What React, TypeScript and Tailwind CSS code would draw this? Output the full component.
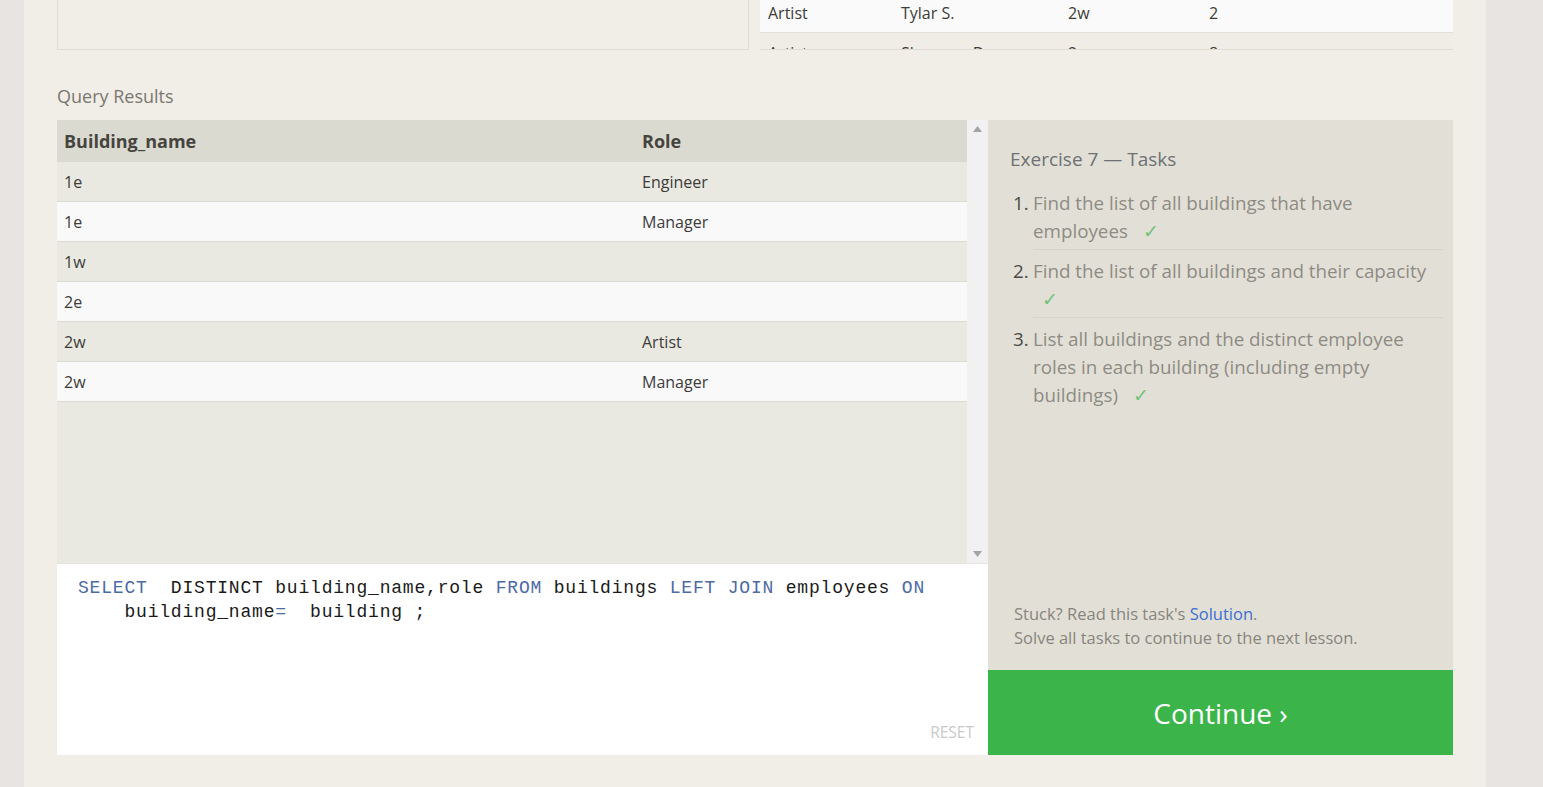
const results: [string, string][] = [
  ['1e', 'Engineer'],
  ['1e', 'Manager'],
  ['1w', ''],
  ['2e', ''],
  ['2w', 'Artist'],
  ['2w', 'Manager'],
];

const topRows = [
  ['Artist', 'Tylar S.', '2w', '2'],
  ['Artist', 'Sherman D.', '2w', '8'],
];

function Check({ className = '' }: { className?: string }) {
  return <span className={`text-[#74c27a] ${className}`}>✓</span>;
}

function TaskItem({ n, children, last }: { n: number; children: React.ReactNode; last?: boolean }) {
  return (
    <li className="flex">
      <span className="w-[23px] shrink-0 pl-[3px] pt-[7px] text-[#4b4a47]">{n}.</span>
      <div className={`flex-1 pt-[7px] pb-[4px] ${last ? '' : 'border-b border-[#d6d4ca]'}`}>{children}</div>
    </li>
  );
}

export default function App() {
  return (
    <div className="min-h-screen bg-[#e8e4e1] font-['Open_Sans',sans-serif]">
      <div className="ml-[24px] w-[1462px] h-[787px] bg-[#f0eee7] px-[33px] overflow-hidden">
        {/* top area, scrolled off */}
        <div className="flex h-[50px]">
          <div className="w-[692px] border-l border-r border-b border-[#e0ddd5]" />
          <div className="ml-[11px] flex-1 border-b border-[#e0ddd5] overflow-hidden">
            <div className="-mt-[7px] text-[16px] text-[#3d3c39]">
              {topRows.map((r, i) => (
                <div
                  key={i}
                  className={`flex h-[40px] items-center pl-[8px] ${
                    i === 0 ? 'bg-[#fafafa] border-b border-[#e0ddd5]' : 'bg-[#efede6]'
                  }`}
                >
                  <span className="w-[133px]">{r[0]}</span>
                  <span className="w-[167px]">{r[1]}</span>
                  <span className="w-[141px]">{r[2]}</span>
                  <span>{r[3]}</span>
                </div>
              ))}
            </div>
          </div>
        </div>

        <div className="mt-[34px] mb-[12px] h-[24px] leading-[24px] text-[18px] text-[#7b7770]">Query Results</div>

        <div className="flex h-[635px]">
          {/* left: results + editor */}
          <div className="w-[931px] flex flex-col">
            <div className="flex h-[443px]">
              <div className="flex-1 bg-[#e9e8e1] text-[16px] text-[#3d3c39]">
                <div className="flex h-[42px] items-center bg-[#dbdad0] pl-[7px] font-bold text-[18px] text-[#45443f]">
                  <span className="w-[578px]">Building_name</span>
                  <span>Role</span>
                </div>
                {results.map((r, i) => (
                  <div
                    key={i}
                    className={`flex h-[40px] items-center pl-[7px] border-b border-[#dcdad2] ${
                      i % 2 === 0 ? 'bg-[#e9e8e1]' : 'bg-[#f9f9f9]'
                    }`}
                  >
                    <span className="w-[578px]">{r[0]}</span>
                    <span>{r[1]}</span>
                  </div>
                ))}
              </div>
              <div className="w-[21px] bg-[#f1f1f1] flex flex-col items-center justify-between py-[6px] text-[#a3a3a3]">
                <svg width="9" height="6" viewBox="0 0 9 6"><path d="M4.5 0L9 6H0z" fill="currentColor" /></svg>
                <svg width="9" height="6" viewBox="0 0 9 6"><path d="M0 0h9L4.5 6z" fill="currentColor" /></svg>
              </div>
            </div>
            <div className="flex-1 bg-white border-t border-[#e6e4dc] flex flex-col pl-[21px] pr-[14px] pt-[12px] pb-[11px]">
              <pre className="font-['Liberation_Mono',monospace] text-[18px] leading-[24px] tracking-[0.8px] text-[#1a1a1a]">
                <span className="text-[#4d6aa6]">SELECT</span>  DISTINCT building_name,role{' '}
                <span className="text-[#4d6aa6]">FROM</span> buildings <span className="text-[#4d6aa6]">LEFT JOIN</span>{' '}
                employees <span className="text-[#4d6aa6]">ON</span>
                {'\n'}
                {'    '}building_name<span className="text-[#4d6aa6]">=</span>  building ;
              </pre>
              <div className="mt-auto self-end text-[15.5px] text-[#c9c9c9]">RESET</div>
            </div>
          </div>

          {/* right: tasks */}
          <div className="w-[465px] flex flex-col">
            <div className="flex-1 bg-[#e2e0d6] pl-[22px] pr-[10px] pt-[26px] pb-[20px] flex flex-col">
              <div className="text-[19px] leading-[26px] text-[#6d7075]">Exercise 7 — Tasks</div>
              <ol className="mt-[10px] text-[18.8px] leading-[28px] text-[#8e8b85]">
                <TaskItem n={1}>
                  Find the list of all buildings that have
                  <br />
                  employees <Check className="ml-[10px]" />
                </TaskItem>
                <TaskItem n={2}>
                  Find the list of all buildings and their capacity
                  <br />
                  <Check className="ml-[9px]" />
                </TaskItem>
                <TaskItem n={3} last>
                  List all buildings and the distinct employee
                  <br />
                  roles in each building (including empty
                  <br />
                  buildings) <Check className="ml-[10px]" />
                </TaskItem>
              </ol>
              <div className="mt-auto pl-[4px] text-[16.5px] leading-[24px] text-[#88857e]">
                Stuck? Read this task's <span className="text-[#3b6fd0]">Solution</span>.
                <br />
                Solve all tasks to continue to the next lesson.
              </div>
            </div>
            <button className="h-[85px] bg-[#3bb54a] text-white text-[28px]">Continue ›</button>
          </div>
        </div>
      </div>
    </div>
  );
}
